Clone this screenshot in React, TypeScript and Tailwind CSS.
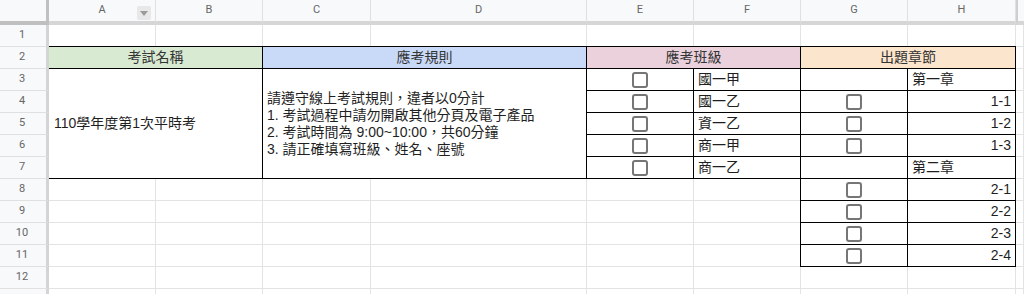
import type { ReactNode } from "react"

const font = "font-['Liberation_Sans','Noto_Sans_CJK_TC',sans-serif]"
const letters = ["A", "B", "C", "D", "E", "F", "G", "H", ""]

const RowHead = ({ n }: { n?: number }) => (
    <div className="flex items-center justify-center border-r-[3px] border-b border-r-[#d4d4d4] border-b-[#e0e0e0] bg-[#f8f9fa] pr-[2px] font-['Roboto',sans-serif] text-[11px] text-[#666]">
        {n}
    </div>
)

const Plain = () => <div className="border-r border-b border-[#e2e3e3] bg-white" />

const Checkbox = () => <div className="size-[16px] rounded-[3px] border-2 border-[#767676] bg-white" />

type CellProps = {
    children?: ReactNode
    className?: string
    first?: boolean
}

// cells that belong to the bordered table; they overlap the gridline above and to the left
const T = ({ children, className = "", first = false }: CellProps) => (
    <div
        className={`-mt-px flex items-center border border-black ${first ? "border-l-0" : "-ml-px"} ${className}`}
    >
        {children}
    </div>
)

const Box = () => (
    <T className="justify-center bg-white">
        <Checkbox />
    </T>
)

const Label = ({ text, right = false }: { text: string; right?: boolean }) => (
    <T className={`bg-white px-1 ${right ? "justify-end" : ""}`}>{text}</T>
)

const PlainRow = ({ n }: { n?: number }) => (
    <>
        <RowHead n={n} />
        {letters.map((l, i) => (
            <Plain key={l + i} />
        ))}
    </>
)

export default function App() {
    const classes = ["國一甲", "國一乙", "資一乙", "商一甲", "商一乙"]
    const chapters: [string, boolean, boolean][] = [
        ["第一章", false, false],
        ["1-1", true, true],
        ["1-2", true, true],
        ["1-3", true, true],
        ["第二章", false, false],
    ]

    return (
        <div className={`h-[294px] w-[1024px] overflow-hidden bg-white ${font} text-[14px] text-[#1f1f1f]`}>
            <div className="grid grid-cols-[49px_107px_107px_108px_216px_107px_107px_107px_108px_1fr] grid-rows-[25px_repeat(13,22px)]">
                {/* column headers */}
                <div className="border-r-[3px] border-b-4 border-[#c0c0c0] bg-[#f8f9fa]" />
                {letters.map((l, i) => (
                    <div
                        key={"h" + i}
                        className={`relative flex items-center justify-center border-b-4 border-b-[#d6d6d6] bg-[#f8f9fa] font-['Roboto',sans-serif] text-[11px] text-[#666] ${i === 8 ? "border-l-2 border-l-[#cfcfcf]" : "border-r border-r-[#e0e0e0]"}`}
                    >
                        {l}
                        {i === 0 && (
                            <div className="absolute top-[6px] right-[4px] flex size-[14px] items-center justify-center rounded-[2px] bg-[#e8e8e8]">
                                <svg width="8" height="5" viewBox="0 0 8 5">
                                    <path d="M0 0h8L4 5z" fill="#9a9a9a" />
                                </svg>
                            </div>
                        )}
                    </div>
                ))}

                <PlainRow n={1} />

                {/* row 2: section titles */}
                <RowHead n={2} />
                <T first className="col-span-2 justify-center bg-[#d9ead3] text-[#333]">考試名稱</T>
                <T className="col-span-2 justify-center bg-[#c9daf8] text-[#333]">應考規則</T>
                <T className="col-span-2 justify-center bg-[#ead1dc] text-[#333]">應考班級</T>
                <T className="col-span-2 justify-center bg-[#fce5cd] text-[#333]">出題章節</T>
                <Plain />

                {/* rows 3 - 7 */}
                {classes.map((c, i) => {
                    const [chapter, hasBox, right] = chapters[i]
                    return (
                        <div key={c + i} className="contents">
                            <RowHead n={i + 3} />
                            {i === 0 && (
                                <>
                                    <T first className="col-span-2 row-span-5 bg-white pl-[5px]">
                                        110學年度第1次平時考
                                    </T>
                                    <T className="col-span-2 row-span-5 bg-white px-1 leading-[17px]">
                                        <div>
                                            <div>請遵守線上考試規則，違者以0分計</div>
                                            <div>1. 考試過程中請勿開啟其他分頁及電子產品</div>
                                            <div>2. 考試時間為 9:00~10:00，共60分鐘</div>
                                            <div>3. 請正確填寫班級、姓名、座號</div>
                                        </div>
                                    </T>
                                </>
                            )}
                            <Box />
                            <Label text={c} />
                            {hasBox ? <Box /> : <T className="bg-white" />}
                            <Label text={chapter} right={right} />
                            <Plain />
                        </div>
                    )
                })}

                {/* rows 8 - 11 */}
                {["2-1", "2-2", "2-3", "2-4"].map((s, i) => (
                    <div key={s} className="contents">
                        <RowHead n={i + 8} />
                        <Plain />
                        <Plain />
                        <Plain />
                        <Plain />
                        <Plain />
                        <Plain />
                        <Box />
                        <Label text={s} right />
                        <Plain />
                    </div>
                ))}

                <PlainRow n={12} />
                <PlainRow />
            </div>
        </div>
    )
}
